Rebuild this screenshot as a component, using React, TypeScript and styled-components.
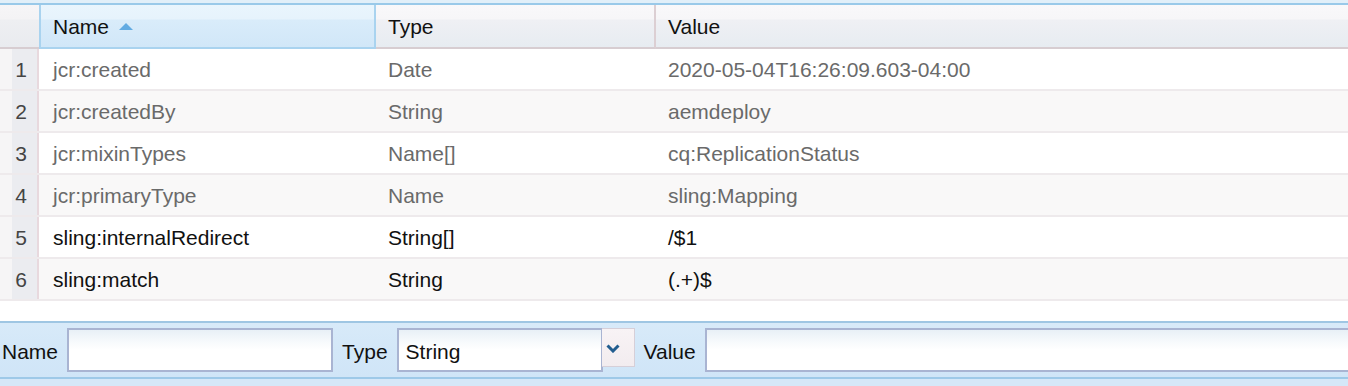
import React from "react";
import styled, { createGlobalStyle } from "styled-components";

const GlobalStyle = createGlobalStyle`
  html, body { margin: 0; padding: 0; background: #ffffff; }
  body {
    font-family: "Liberation Sans", Arial, Helvetica, sans-serif;
    font-size: 21px;
    overflow: hidden;
  }
  * { box-sizing: border-box; }
`;

const COLS = "39px 337px 280px 1fr";

const Page = styled.div`
  width: 1348px;
  height: 386px;
  display: flex;
  flex-direction: column;
  overflow: hidden;
  background: #ffffff;
`;

const TopStrip = styled.div`
  height: 5px;
  flex: none;
  background: #e1eff9;
  border-bottom: 2px solid #99c9e9;
`;

const HeaderRow = styled.div`
  display: grid;
  grid-template-columns: ${COLS};
  height: 44px;
  flex: none;
`;

const HeadCell = styled.div<{ $sorted?: boolean; $divider?: boolean }>`
  display: flex;
  align-items: center;
  gap: 10px;
  padding-left: 12px;
  padding-top: 2px;
  color: #111;
  background: ${(p) =>
    p.$sorted
      ? "linear-gradient(#e9f5fd 0px, #e6f3fc 14px, #d9ecfa 15px, #d1e7f8 100%)"
      : "linear-gradient(#f9f8fa 0px, #f7f6f8 14px, #eff0f4 15px, #e7ecf1 100%)"};
  border-bottom: 2px solid ${(p) => (p.$sorted ? "#a9d3ef" : "#d7cdd1")};
  ${(p) => (p.$sorted ? "border-left: 2px solid #a9d3ef; border-right: 2px solid #a9d3ef;" : "")}
  ${(p) => (p.$divider ? "border-right: 2px solid #dccfd3;" : "")}
`;

const NumHead = styled.div`
  background: linear-gradient(#f6f5f7 0px, #f4f3f5 14px, #eeeff2 15px, #e9ebef 100%);
  border-bottom: 2px solid #d7cdd1;
`;

const SortArrow = styled.svg`
  width: 14px;
  height: 7px;
  margin-top: -2px;
`;

const Body = styled.div`
  display: flex;
  flex-direction: column;
  flex: none;
`;

const Row = styled.div<{ $even: boolean }>`
  display: grid;
  grid-template-columns: ${COLS};
  height: 42px;
  border-bottom: 2px solid #eeeaec;
  background: ${(p) => (p.$even ? "#f9f8f8" : "#ffffff")};
`;

const NumCell = styled.div`
  display: flex;
  align-items: center;
  justify-content: flex-end;
  padding-right: 10px;
  padding-top: 2px;
  color: #444;
  background: linear-gradient(to right, #f6f5f6 12px, #ebecf0 12px);
  border-right: 2px solid #e8d9de;
`;

const Cell = styled.div<{ $muted: boolean; $pad: number }>`
  display: flex;
  align-items: center;
  padding-left: ${(p) => p.$pad}px;
  padding-top: 2px;
  color: ${(p) => (p.$muted ? "#6a6a6a" : "#111111")};
  white-space: nowrap;
  overflow: hidden;
`;

const Spacer = styled.div`
  height: 20px;
  flex: none;
`;

const Toolbar = styled.div`
  flex: none;
  height: 58px;
  display: flex;
  align-items: center;
  gap: 9px;
  padding-left: 2px;
  border-top: 2px solid #9fc6e3;
  border-bottom: 2px solid #9ec9e8;
  background: linear-gradient(#d8eaf9 0%, #d3e7f8 50%, #d0e5f7 100%);
  overflow: hidden;
`;

const Label = styled.span`
  color: #111;
  flex: none;
  padding-top: 3px;
`;

const TextBox = styled.div<{ $width?: number }>`
  height: 44px;
  ${(p) => (p.$width ? `width: ${p.$width}px; flex: none;` : "flex: 1; margin-right: -6px;")}
  border: 2px solid #a9b4d2;
  background: linear-gradient(#e8f0f6 0px, #f7fafc 12px, #ffffff 20px);
  display: flex;
  align-items: center;
  padding-left: 7px;
  padding-top: 3px;
  color: #111;
`;

const SelectWrap = styled.div`
  display: flex;
  align-items: flex-start;
  flex: none;
  height: 44px;
`;

const DropButton = styled.div`
  width: 33px;
  height: 39px;
  margin-left: -1px;
  border: 1px solid #d6cfd8;
  border-left: none;
  background: linear-gradient(#f8f3f5, #f2ecef);
  display: flex;
  align-items: center;
  padding-left: 4px;
  padding-top: 1px;
`;

const Chevron = styled.svg`
  width: 14px;
  height: 9px;
  flex: none;
`;

const BottomFill = styled.div`
  flex: 1;
  background: #d5e7f8;
`;

type Prop = { name: string; type: string; value: string; protected: boolean };

const props: Prop[] = [
  { name: "jcr:created", type: "Date", value: "2020-05-04T16:26:09.603-04:00", protected: true },
  { name: "jcr:createdBy", type: "String", value: "aemdeploy", protected: true },
  { name: "jcr:mixinTypes", type: "Name[]", value: "cq:ReplicationStatus", protected: true },
  { name: "jcr:primaryType", type: "Name", value: "sling:Mapping", protected: true },
  { name: "sling:internalRedirect", type: "String[]", value: "/$1", protected: false },
  { name: "sling:match", type: "String", value: "(.+)$", protected: false },
];

export default function App() {
  return (
    <>
      <GlobalStyle />
      <Page>
        <TopStrip />
        <HeaderRow>
          <NumHead />
          <HeadCell $sorted>
            Name
            <SortArrow viewBox="0 0 14 7">
              <polygon points="0,7 7,0 14,7" fill="#62abe2" />
            </SortArrow>
          </HeadCell>
          <HeadCell $divider>Type</HeadCell>
          <HeadCell>Value</HeadCell>
        </HeaderRow>
        <Body>
          {props.map((p, i) => (
            <Row key={p.name} $even={i % 2 === 1}>
              <NumCell>{i + 1}</NumCell>
              <Cell $muted={p.protected} $pad={14}>{p.name}</Cell>
              <Cell $muted={p.protected} $pad={12}>{p.type}</Cell>
              <Cell $muted={p.protected} $pad={12}>{p.value}</Cell>
            </Row>
          ))}
        </Body>
        <Spacer />
        <Toolbar>
          <Label>Name</Label>
          <TextBox $width={266} />
          <Label>Type</Label>
          <SelectWrap>
            <TextBox $width={206}>String</TextBox>
            <DropButton>
              <Chevron viewBox="0 0 14 9">
                <path d="M1.5 1.5 L7 7 L12.5 1.5" fill="none" stroke="#215d8f" strokeWidth="3" />
              </Chevron>
            </DropButton>
          </SelectWrap>
          <Label>Value</Label>
          <TextBox />
        </Toolbar>
        <BottomFill />
      </Page>
    </>
  );
}
